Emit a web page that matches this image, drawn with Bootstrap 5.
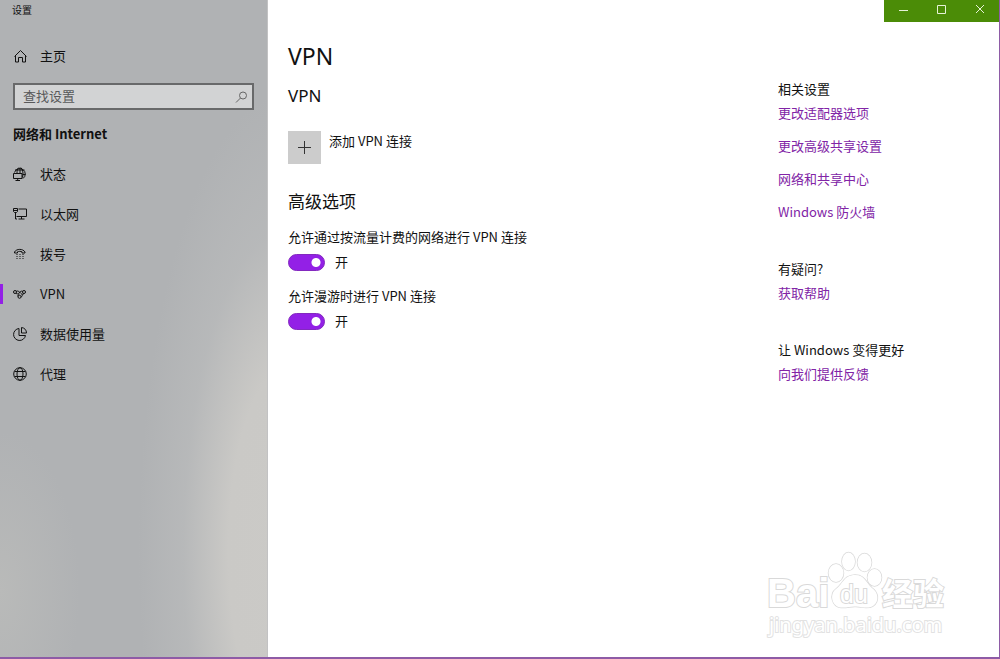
<!DOCTYPE html>
<html lang="zh-CN">
<head>
<meta charset="utf-8">
<meta name="viewport" content="width=device-width, initial-scale=1">
<title>设置</title>
<link href="https://cdn.jsdelivr.net/npm/bootstrap@5.3.0/dist/css/bootstrap.min.css" rel="stylesheet">
<style>
  :root { --accent: #9320e6; --link: #8124a6; }
  body { font-family: "Noto Sans CJK SC", sans-serif; font-size: 13px; line-height: 20px; color: #111; }
  .settings-window { border-right: 1px solid #8e5ba6; border-bottom: 2px solid #8e5ba6; background: #fff; }
  .side-pane {
    flex: 0 0 268px;
    border-right: 1px solid #c2c2c3;
    background:
      radial-gradient(ellipse 150px 460px at 108% 84%, #cbcac7 0, #cac9c6 40%, rgba(190,191,191,.5) 70%, rgba(176,178,180,0) 100%),
      radial-gradient(ellipse 80px 160px at 0 90%, #b9bab9 0, rgba(178,180,182,0) 100%),
      #b0b2b4;
  }
  .window-title { font-size: 10px; padding-left: 12px; }
  .side-row { display: flex; align-items: center; height: 40px; padding: 0 13px; gap: 13px; color: #111; font-size: 13px; text-decoration: none; position: relative; }
  .side-row:hover { background: rgba(255,255,255,.2); color: #111; }
  .side-row.active::before { content: ""; position: absolute; left: 0; top: 10px; bottom: 10px; width: 3px; background: var(--accent); }
  .glyph { width: 14px; height: 14px; flex: none; fill: none; stroke: currentColor; stroke-width: 1; overflow: visible; }
  .find-box { height: 27px; margin: 7px 13px 0; border: 2px solid #68696a; background: #d2d3d4; }
  .find-box input { font-size: 13px; line-height: 20px; padding: 0 8px 2px; min-height: 0; color: #333; }
  .find-box input::placeholder { color: #58595a; opacity: 1; }
  .find-box .btn { color: #666; padding: 0 4px; line-height: 1; }
  .side-heading { font-size: 13px; font-weight: 700; line-height: 24px; margin: 12px 13px 8px; }
  .caption-bar { height: 22px; }
  .caption-buttons { background: #4b8c07; width: 115px; }
  .caption-buttons .btn { color: #e6f2d8; border-radius: 0; line-height: 1; display: flex; justify-content: center; padding: 4px 0 0; }
  .caption-buttons svg { width: 10px; height: 10px; fill: none; stroke: currentColor; overflow: visible; }
  .page-body { padding: 18px 0 24px 20px; }
  .page-title, .section-title { font-family: "Noto Sans", "Noto Sans CJK SC", sans-serif; font-weight: 400; }
  .page-title { font-size: 23px; line-height: 32px; margin-bottom: 12px; }
  .section-title { font-size: 17px; line-height: 24px; }
  .intro-title { margin-bottom: 23px; }
  .options-title { margin: 26px 0 13px; }
  .add-button { font-size: 13px; line-height: 20px; color: #111; }
  .add-tile { width: 33px; height: 33px; background: #ccc; }
  .add-tile svg { width: 13px; height: 13px; stroke: #333; }
  .switch-line { height: 20px; margin-top: 5px; gap: 10px; }
  .switch-line .form-check-input {
    width: 37px; height: 17px; margin: 0; border-radius: 9px; border: 1px solid #7e2fb6; background-color: #fff;
    background-image: radial-gradient(circle at 8px 50%, #555 4px, transparent 5px);
  }
  .switch-line .form-check-input:checked {
    background-color: var(--accent); background-size: 100% 100%; border-color: #8329bf;
    background-image: radial-gradient(circle at 27px 50%, #fff 4px, transparent 5px);
  }
  .setting { margin-bottom: 14px; }
  .related { flex: 0 0 221px; padding-top: 39px; }
  .related h3 { font-size: 13px; line-height: 20px; font-weight: 400; margin: 0 0 4px; }
  .related a { color: var(--link); text-decoration: none; }
  .related a:hover { text-decoration: underline; }
  .link-list { gap: 13px; margin-bottom: 37px; }
  .watermark { width: 250px; height: 119px; pointer-events: none; }
</style>
</head>
<body>
<div class="settings-window d-flex min-vh-100 position-relative">
  <aside class="side-pane d-flex flex-column">
    <div class="window-title">设置</div>
    <a href="#" class="side-row mt-3">
      <svg class="glyph" viewBox="0 0 14 14"><path d="M1.500 7.500 7.500 1.500 13.500 7.500M2.500 6.500V13H5.500V8.500H9.500V13H12.500V6.500"/></svg>主页</a>
    <form class="find-box d-flex align-items-center">
      <input type="text" class="form-control border-0 bg-transparent shadow-none rounded-0" placeholder="查找设置" aria-label="查找设置">
      <button type="button" class="btn border-0" aria-label="搜索"><svg class="glyph" viewBox="0 0 14 14"><circle cx="9" cy="4.500" r="3.500"/><path d="M6.500 7 2 11.500"/></svg></button>
    </form>
    <h2 class="side-heading">网络和 Internet</h2>
    <nav class="d-flex flex-column">
      <a href="#" class="side-row"><svg class="glyph" viewBox="0 0 14 14"><path d="M1.500 5.500A5.500 5.500 0 1 1 10 11.500M5.500.7C4.300 2.500 4 4 4 6M8 .7C10 3 10.500 6.500 9.500 10.500M2 3H11.500M7 .5V6M9.500 7.500H12.500M.5 6.500H9V11.500H.5ZM4.700 11.500V13.500M2.500 13.500H7"/></svg>状态</a>
      <a href="#" class="side-row"><svg class="glyph" viewBox="0 0 14 14"><path d="M5.500 2H13.500V9.500H3.500M8.500 9.500V12M5.500 12H11.500M.5 1.500H4.500V4.500L3.500 5.500H1.500L.5 4.500ZM.5 3.500H4.500M2.500 5.500V12H4"/></svg>以太网</a>
      <a href="#" class="side-row"><svg class="glyph" viewBox="0 0 14 14"><path d="M1.500 6V5C3.500 1.500 10 1.500 12 5V6H9V4.800C8 4.200 5.500 4.200 4.500 4.800V6Z"/><path stroke-dasharray="1 2" d="M3.500 7.500H10.500M3.500 9.500H10.500M3.500 11.500H10.500"/></svg>拨号</a>
      <a href="#" class="side-row active" aria-current="page"><svg class="glyph" viewBox="0 0 14 14"><circle cx="2" cy="5" r="1.500"/><circle cx="11" cy="5" r="1.500"/><circle cx="6.500" cy="9.800" r="1.500"/><path d="M3.300 4.200C5.300 3.500 6.500 5 7.500 6C8.500 7 10 8 11 6.500M3 6.200C4 7.300 5.200 7 6 6C7 4.700 8 3.700 9.700 4.300M5 9.500C4.500 8 5.500 7.500 6.500 7M8 10C9.300 9.500 9.500 8.500 9 7.300"/></svg>VPN</a>
      <a href="#" class="side-row"><svg class="glyph" viewBox="0 0 14 14"><path d="M6 1.500A6 6 0 1 0 12.500 8.500H6ZM8.500.5V6H13.500C13.500 3 11.500.8 8.500.5Z"/></svg>数据使用量</a>
      <a href="#" class="side-row"><svg class="glyph" viewBox="0 0 14 14"><circle cx="7" cy="7" r="6.300"/><ellipse cx="7" cy="7" rx="3" ry="6.300"/><path d="M1.500 4.500H12.500M1.500 9.500H12.500"/></svg>代理</a>
    </nav>
  </aside>

  <main class="flex-grow-1 d-flex flex-column">
    <div class="caption-bar d-flex justify-content-end">
      <div class="caption-buttons d-flex">
        <button type="button" class="btn border-0 flex-fill" aria-label="最小化"><svg viewBox="0 0 10 10"><path d="M1 6.500H10"/></svg></button>
        <button type="button" class="btn border-0 flex-fill" aria-label="最大化"><svg viewBox="0 0 10 10"><path d="M1.500 1.500H9.500V9.500H1.500Z"/></svg></button>
        <button type="button" class="btn border-0 flex-fill" aria-label="关闭"><svg viewBox="0 0 10 10"><path d="M1 1 9 9M9 1 1 9"/></svg></button>
      </div>
    </div>
    <div class="page-body d-flex">
      <section class="flex-grow-1">
        <h1 class="page-title">VPN</h1>
        <h2 class="section-title intro-title">VPN</h2>
        <button type="button" class="add-button btn border-0 p-0 d-flex align-items-start gap-2">
          <span class="add-tile d-flex align-items-center justify-content-center"><svg viewBox="0 0 13 13"><path d="M6.500 0V13M0 6.500H13"/></svg></span>
          <span>添加 VPN 连接</span>
        </button>
        <h2 class="section-title options-title">高级选项</h2>
        <div class="setting">
          <label class="d-block" for="metered">允许通过按流量计费的网络进行 VPN 连接</label>
          <div class="switch-line d-flex align-items-center">
            <input class="form-check-input" type="checkbox" role="switch" id="metered" checked><span>开</span>
          </div>
        </div>
        <div class="setting">
          <label class="d-block" for="roaming">允许漫游时进行 VPN 连接</label>
          <div class="switch-line d-flex align-items-center">
            <input class="form-check-input" type="checkbox" role="switch" id="roaming" checked><span>开</span>
          </div>
        </div>
      </section>
      <aside class="related">
        <h3>相关设置</h3>
        <div class="link-list d-flex flex-column align-items-start">
          <a href="#">更改适配器选项</a><a href="#">更改高级共享设置</a><a href="#">网络和共享中心</a><a href="#">Windows 防火墙</a>
        </div>
        <h3>有疑问?</h3>
        <div class="link-list d-flex flex-column align-items-start"><a href="#">获取帮助</a></div>
        <h3>让 Windows 变得更好</h3>
        <div class="link-list d-flex flex-column align-items-start"><a href="#">向我们提供反馈</a></div>
      </aside>
    </div>
  </main>

  <svg class="watermark position-absolute bottom-0 end-0" viewBox="0 0 250 119" fill="#fff" stroke="#d9d9d9" stroke-width="1.500" paint-order="stroke">
    <ellipse cx="87" cy="35" rx="7.500" ry="9"/><ellipse cx="99.500" cy="23.500" rx="6.500" ry="9"/><ellipse cx="115.500" cy="24.500" rx="7" ry="9"/><ellipse cx="125.500" cy="39.500" rx="7" ry="8.500"/>
    <path d="M106 37C95 37 94 46 87 51C80 56 83 69 92 69.500C98 70 102 68 107 68.500C114 69 119 71 124 68C131 63 129 54 123 50C117 45 116 37 106 37Z"/>
    <g stroke-width="2">
      <text x="18" y="69" font-family="Liberation Sans, sans-serif" font-weight="700" font-size="40">Bai</text>
      <text x="91" y="65" font-family="Liberation Sans, sans-serif" font-size="25">du</text>
      <text x="133" y="67" font-family="Noto Sans CJK SC, sans-serif" font-weight="700" font-size="31">经验</text>
      <text x="20" y="94" font-family="Noto Sans, sans-serif" font-size="20" stroke="#e2e2e2">jingyan.baidu.com</text>
    </g>
  </svg>
</div>
<script src="https://cdn.jsdelivr.net/npm/bootstrap@5.3.0/dist/js/bootstrap.bundle.min.js"></script>
</body>
</html>
